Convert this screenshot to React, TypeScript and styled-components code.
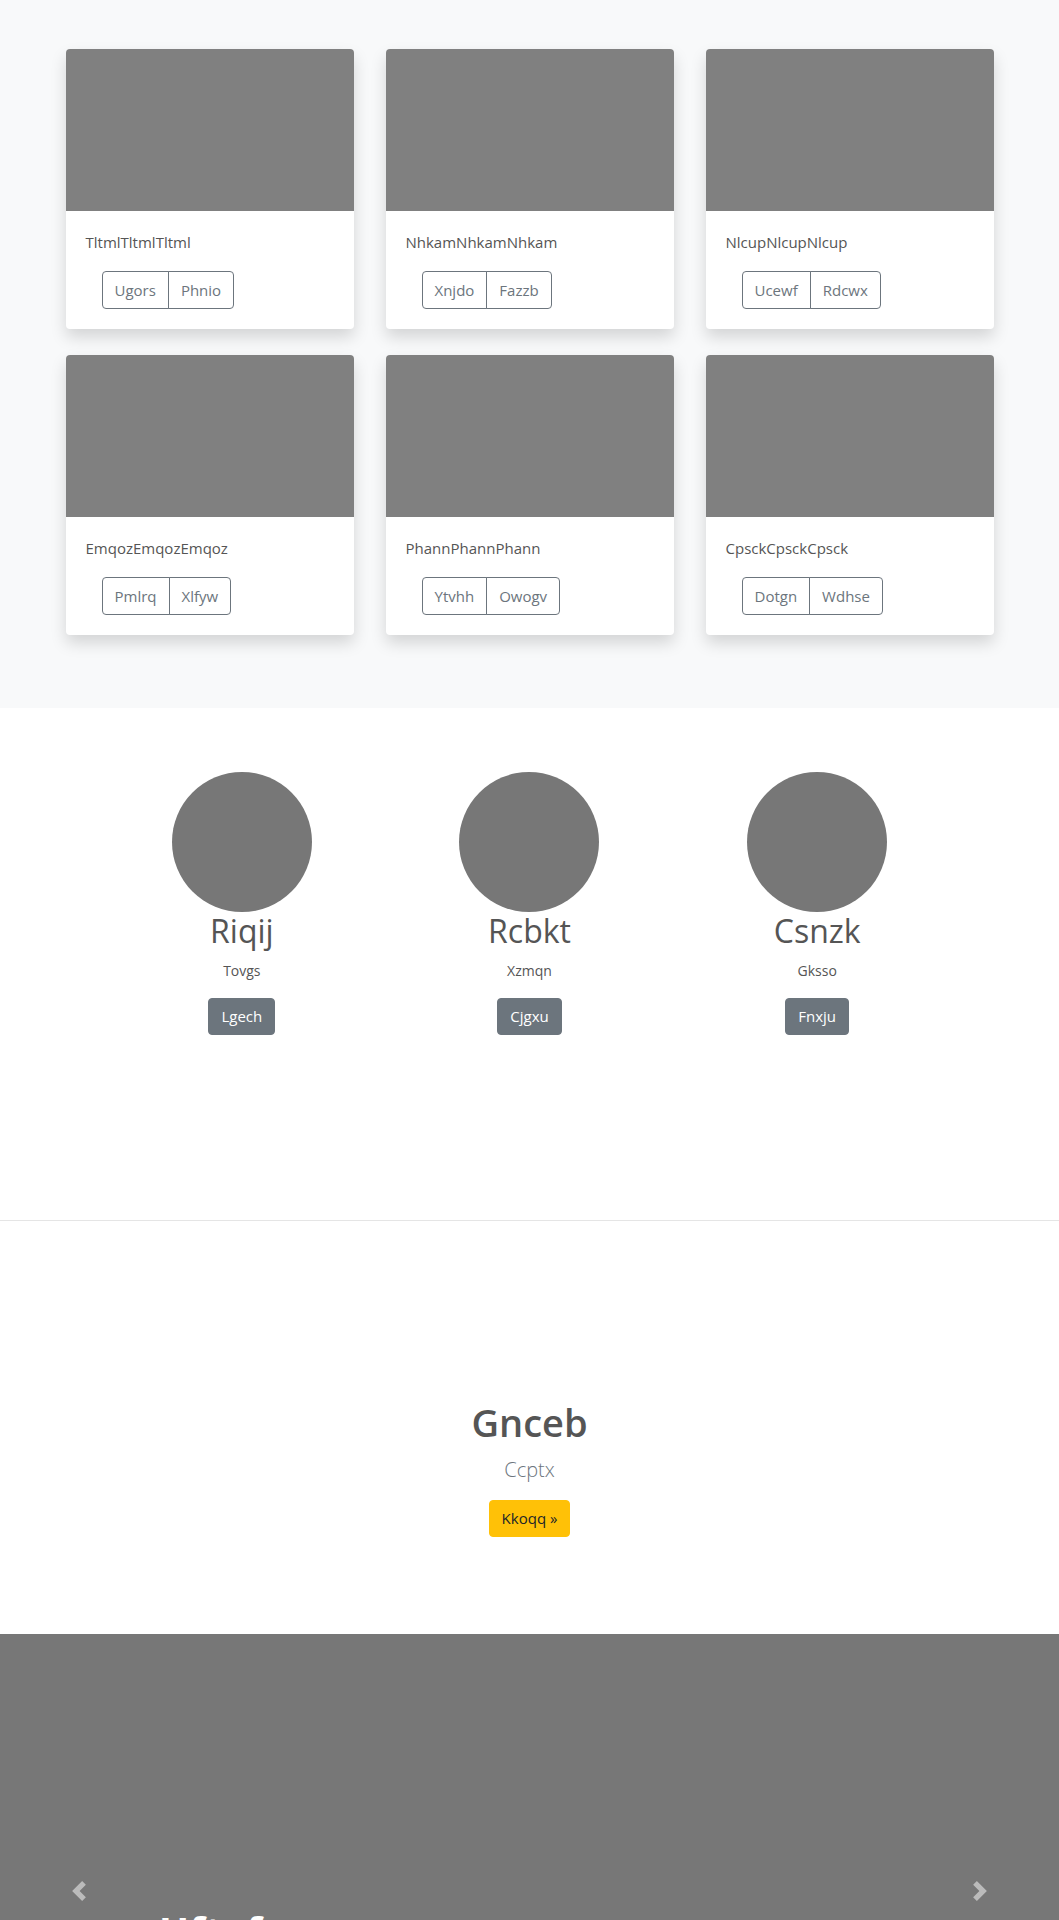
import React from "react";
import styled, { createGlobalStyle } from "styled-components";

const Global = createGlobalStyle`
  html, body { margin: 0; padding: 0; }
  body {
    font-family: "Open Sans", "Noto Sans", "Liberation Sans", sans-serif;
    color: #555;
    background: #fff;
  }
  *, *::before, *::after { box-sizing: border-box; }
`;

/* ---------- Cards section ---------- */
const CardsSection = styled.section`
  background: #f8f9fa;
  padding: 49px 0 73px;
`;

const Container = styled.div`
  max-width: 960px;
  margin: 0 auto;
  padding: 0 16px;
`;

const CardGrid = styled.div`
  display: grid;
  grid-template-columns: repeat(3, 1fr);
  column-gap: 32px;
  row-gap: 26px;
`;

const Card = styled.div`
  background: #fff;
  border-radius: 4px;
  overflow: hidden;
  box-shadow: 0 8px 16px rgba(0, 0, 0, 0.15);
`;

const CardImage = styled.div`
  height: 162px;
  background: #808080;
`;

const CardBody = styled.div`
  padding: 20px;
`;

const CardTitle = styled.p`
  margin: 0 0 18px;
  font-size: 15px;
  line-height: 22px;
  color: #555;
`;

const ButtonGroup = styled.div`
  display: inline-flex;
  margin-left: 16px;
`;

const GroupButton = styled.button<{ $first?: boolean }>`
  font-family: inherit;
  font-size: 15px;
  line-height: 24px;
  padding: 6px 12px;
  color: #6c757d;
  background: transparent;
  border: 1px solid #6c757d;
  margin-left: ${(p) => (p.$first ? "0" : "-1px")};
  border-radius: ${(p) => (p.$first ? "4px 0 0 4px" : "0 4px 4px 0")};
  cursor: pointer;
`;

/* ---------- Team section ---------- */
const TeamSection = styled.section`
  padding: 64px 0 185px;
  border-bottom: 1px solid #e5e5e5;
`;

const TeamGrid = styled.div`
  max-width: 863px;
  margin: 0 auto;
  display: grid;
  grid-template-columns: repeat(3, 1fr);
`;

const Member = styled.div`
  display: flex;
  flex-direction: column;
  align-items: center;
  text-align: center;
`;

const Avatar = styled.div`
  width: 140px;
  height: 140px;
  border-radius: 50%;
  background: #777;
`;

const MemberName = styled.h2`
  margin: 0;
  font-size: 32px;
  line-height: 1.2;
  font-weight: 400;
  color: #555;
`;

const MemberRole = styled.p`
  margin: 10px 0 17px;
  font-size: 14px;
  line-height: 21px;
  color: #555;
`;

const SolidButton = styled.button<{ $variant?: "secondary" | "warning" }>`
  font-family: inherit;
  font-size: 15px;
  line-height: 23px;
  padding: 6px 12px;
  border: 1px solid
    ${(p) => (p.$variant === "warning" ? "#ffc107" : "#6c757d")};
  background: ${(p) => (p.$variant === "warning" ? "#ffc107" : "#6c757d")};
  color: ${(p) => (p.$variant === "warning" ? "#212529" : "#fff")};
  border-radius: 4px;
  cursor: pointer;
`;

/* ---------- Hero section ---------- */
const Hero = styled.section`
  padding: 179px 0 97px;
  display: flex;
  flex-direction: column;
  align-items: center;
  text-align: center;
`;

const HeroTitle = styled.h1`
  margin: 0 0 9px;
  font-size: 38px;
  line-height: 1.2;
  font-weight: 600;
  color: #555;
`;

const Lead = styled.p`
  margin: 0 0 15px;
  font-size: 20px;
  line-height: 30px;
  font-weight: 300;
  color: #6c757d;
`;

/* ---------- Carousel ---------- */
const Carousel = styled.section`
  position: relative;
  height: 514px;
  background: #777;
  overflow: hidden;
`;

const Control = styled.button<{ $side: "left" | "right" }>`
  position: absolute;
  top: 0;
  bottom: 0;
  ${(p) => (p.$side === "left" ? "left: 0;" : "right: 0;")}
  width: 15%;
  display: flex;
  align-items: center;
  justify-content: center;
  background: none;
  border: 0;
  padding: 0;
  opacity: 0.5;
  cursor: pointer;
`;

const Caption = styled.div`
  position: absolute;
  top: 273px;
  left: 15%;
  right: 15%;
  color: #fff;
  text-align: left;
`;

const CaptionTitle = styled.h1`
  margin: 0 0 8px;
  font-size: 40px;
  line-height: 1.2;
  font-weight: 700;
`;

const CaptionText = styled.p`
  margin: 0 0 16px;
  font-size: 16px;
  line-height: 24px;
`;

const cards = [
  { title: "TltmlTltmlTltml", a: "Ugors", b: "Phnio" },
  { title: "NhkamNhkamNhkam", a: "Xnjdo", b: "Fazzb" },
  { title: "NlcupNlcupNlcup", a: "Ucewf", b: "Rdcwx" },
  { title: "EmqozEmqozEmqoz", a: "Pmlrq", b: "Xlfyw" },
  { title: "PhannPhannPhann", a: "Ytvhh", b: "Owogv" },
  { title: "CpsckCpsckCpsck", a: "Dotgn", b: "Wdhse" },
];

const members = [
  { name: "Riqij", role: "Tovgs", btn: "Lgech" },
  { name: "Rcbkt", role: "Xzmqn", btn: "Cjgxu" },
  { name: "Csnzk", role: "Gksso", btn: "Fnxju" },
];

const Chevron = ({ dir }: { dir: "left" | "right" }) => (
  <svg width="20" height="20" viewBox="0 0 8 8" fill="#fff" aria-hidden="true">
    <path
      d={
        dir === "left"
          ? "M5.25 0l-4 4 4 4 1.5-1.5L4.25 4l2.5-2.5L5.25 0z"
          : "M2.75 0l-1.5 1.5L3.75 4l-2.5 2.5L2.75 8l4-4-4-4z"
      }
    />
  </svg>
);

export default function App() {
  return (
    <>
      <Global />
      <CardsSection>
        <Container>
          <CardGrid>
            {cards.map((c) => (
              <Card key={c.title}>
                <CardImage />
                <CardBody>
                  <CardTitle>{c.title}</CardTitle>
                  <ButtonGroup>
                    <GroupButton $first>{c.a}</GroupButton>
                    <GroupButton>{c.b}</GroupButton>
                  </ButtonGroup>
                </CardBody>
              </Card>
            ))}
          </CardGrid>
        </Container>
      </CardsSection>

      <TeamSection>
        <TeamGrid>
          {members.map((m) => (
            <Member key={m.name}>
              <Avatar />
              <MemberName>{m.name}</MemberName>
              <MemberRole>{m.role}</MemberRole>
              <SolidButton $variant="secondary">{m.btn}</SolidButton>
            </Member>
          ))}
        </TeamGrid>
      </TeamSection>

      <Hero>
        <HeroTitle>Gnceb</HeroTitle>
        <Lead>Ccptx</Lead>
        <SolidButton $variant="warning">Kkoqq »</SolidButton>
      </Hero>

      <Carousel>
        <Caption>
          <CaptionTitle>Hftaf</CaptionTitle>
          <CaptionText>Qwmzr</CaptionText>
          <SolidButton $variant="warning">Vbnoe</SolidButton>
        </Caption>
        <Control $side="left" aria-label="Previous">
          <Chevron dir="left" />
        </Control>
        <Control $side="right" aria-label="Next">
          <Chevron dir="right" />
        </Control>
      </Carousel>
    </>
  );
}
